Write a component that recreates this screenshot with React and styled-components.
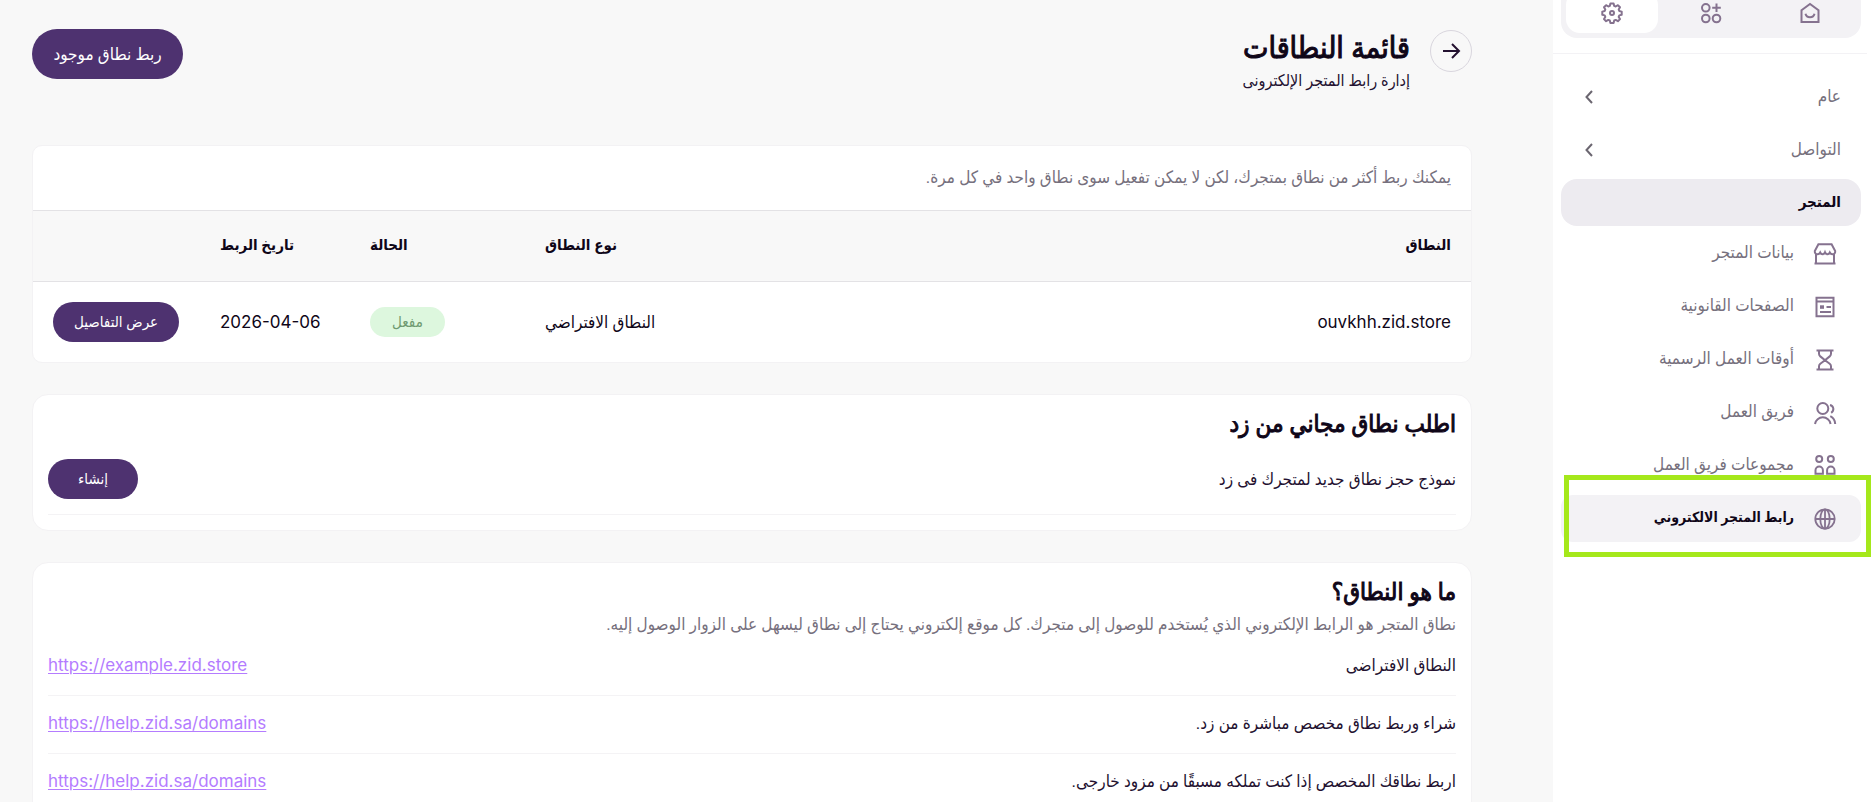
import styled, { createGlobalStyle } from 'styled-components';

const GlobalStyle = createGlobalStyle`
  * {
    box-sizing: border-box;
  }

  body {
    margin: 0;
    background: #f8f8f8;
    color: #0f0618;
    font-family: Roboto, 'DejaVu Sans Condensed', 'DejaVu Sans', sans-serif;
    font-size: 17px;
  }

  button {
    font-family: inherit;
    cursor: pointer;
  }
`;

const Page = styled.div`
  display: flex;
  height: 100vh;
  overflow: hidden;
`;

const Sidebar = styled.aside`
  flex: 0 0 318px;
  background: #fff;
  overflow: hidden;
`;

const TabsWrap = styled.div`
  margin-inline-start: 4px;
  padding: 0 6px 15px 8px;
  border-bottom: 1px solid #f3f2f5;
`;

const Tabs = styled.div`
  display: flex;
  gap: 7px;
  height: 52px;
  margin-top: -14px;
  padding: 5px;
  background: #f3f2f5;
  border-radius: 16px;
`;

const Tab = styled.button`
  flex: 1;
  display: flex;
  align-items: center;
  justify-content: center;
  padding: 2px 0 0;
  border: none;
  border-radius: 14px;
  background: ${props => (props.$active ? '#fff' : 'transparent')};
  color: #85728f;
`;

const Nav = styled.nav`
  display: flex;
  flex-direction: column;
  gap: 6px;
  padding: 19px 10px 0 8px;
`;

const Section = styled.button`
  display: flex;
  align-items: center;
  justify-content: space-between;
  width: 100%;
  height: 47px;
  padding: 0 20px 2px 24px;
  border: none;
  border-radius: 16px;
  background: ${props => (props.$active ? '#edebf0' : 'transparent')};
  color: ${props => (props.$active ? '#0f0618' : '#76707d')};
  font-size: ${props => (props.$active ? '15px' : '17px')};
  font-weight: ${props => (props.$active ? 700 : 400)};

  svg {
    margin-top: 2px;
  }
`;

const SubMenu = styled.div`
  display: flex;
  flex-direction: column;
  gap: 6px;
  margin-top: -2px;
`;

const SubLink = styled.a`
  display: flex;
  align-items: center;
  gap: 19px;
  height: 47px;
  padding: 0 24px;
  border-radius: 12px;
  background: ${props => (props.$active ? '#f3f2f5' : 'transparent')};
  color: ${props => (props.$active ? '#0f0618' : '#76707d')};
  font-size: ${props => (props.$active ? '14px' : '17px')};
  font-weight: ${props => (props.$active ? 700 : 400)};
  text-decoration: none;
  white-space: nowrap;

  svg {
    flex: none;
    color: #85728f;
  }
`;

const SubLabel = styled.span`
  padding-bottom: 3px;
`;

const Marked = styled.div`
  position: relative;

  &::after {
    content: '';
    position: absolute;
    top: -20px;
    bottom: -15px;
    right: -10px;
    left: 3px;
    border: 5px solid #a5e81b;
    pointer-events: none;
  }
`;

const Main = styled.main`
  flex: 1;
  min-width: 0;
  padding: 29px 81px 40px 32px;
  overflow-y: auto;
  scrollbar-width: none;
`;

const PageHeader = styled.header`
  display: flex;
  align-items: flex-start;
  gap: 20px;
  margin-bottom: 50px;
`;

const BackButton = styled.button`
  display: flex;
  align-items: center;
  justify-content: center;
  width: 42px;
  height: 42px;
  margin-top: 1px;
  padding: 0;
  border: 1px solid #d9d6de;
  border-radius: 50%;
  background: transparent;
  color: #231130;
`;

const Titles = styled.div`
  flex: 1;
`;

const Title = styled.h1`
  margin: 0;
  font-size: 30px;
  font-weight: 400;
  line-height: 38px;
  -webkit-text-stroke: 1px currentColor;
`;

const Subtitle = styled.p`
  margin: 0;
  color: #231130;
  font-size: 16px;
  line-height: 28px;
`;

const PillButton = styled.button`
  min-width: ${props => (props.$small ? '90px' : '151px')};
  height: ${props => (props.$small ? '40px' : '50px')};
  padding: 0 21px;
  border: none;
  border-radius: 25px;
  background: #4e3270;
  color: #fff;
  font-size: ${props => (props.$small ? '15px' : '17px')};
  white-space: nowrap;
`;

const Card = styled.section`
  margin-bottom: 31px;
  padding: ${props => (props.$flush ? '0' : '11px 15px 15px')};
  border: 1px solid #f3f2f4;
  border-radius: ${props => (props.$flush ? '10px' : '16px')};
  background: #fff;
  overflow: hidden;
`;

const CardIntro = styled.p`
  margin: 0;
  padding: 17px 20px 19px;
  color: #76707d;
  line-height: 28px;
`;

const CardTitle = styled.h2`
  margin: 0;
  font-size: 24px;
  font-weight: 400;
  line-height: 36px;
  -webkit-text-stroke: 1px currentColor;
`;

const CardText = styled.p`
  margin: 0;
  color: #76707d;
  line-height: 28px;
`;

const Table = styled.table`
  width: 100%;
  border-collapse: collapse;
  table-layout: fixed;
`;

const Th = styled.th`
  width: ${props => props.$width};
  height: 71px;
  padding: 0 20px 2px;
  border-top: 1px solid #e3e2e5;
  border-bottom: 1px solid #e3e2e5;
  background: #f8f8f8;
  font-size: 15px;
  font-weight: 700;
  text-align: ${props => (props.$start ? 'start' : 'end')};
`;

const Td = styled.td`
  height: 80px;
  padding: 0 20px;
  text-align: ${props => (props.$start ? 'start' : 'end')};
`;

const Latin = styled.span`
  font-family: Inter, sans-serif;
`;

const Badge = styled.span`
  display: inline-block;
  width: 75px;
  border-radius: 15px;
  background: #ddf7de;
  color: #6f9a71;
  font-size: 15px;
  line-height: 30px;
  text-align: center;
`;

const Row = styled.div`
  display: flex;
  align-items: center;
  justify-content: space-between;
  padding: ${props => (props.$tall ? '17px 0 15px' : '13px 0 16px')};
  border-bottom: 1px solid #f4f3f5;
  color: #231130;
  line-height: 28px;
`;

const TextLink = styled.a`
  color: #b47cff;
  font-family: Inter, sans-serif;
  text-decoration: underline;
  text-decoration-thickness: 1px;
  text-underline-offset: 2px;
`;

const Icon = ({ size = 24, children }) => (
  <svg
    width={size}
    height={size}
    viewBox="0 0 24 24"
    fill="none"
    stroke="currentColor"
    strokeWidth="2"
    aria-hidden="true"
  >
    {children}
  </svg>
);

const HomeIcon = () => (
  <Icon>
    <path d="M3.5 9.2 12 3l8.500 6.200V21h-17z" />
    <path d="M7.500 12.800a4.600 4.300 0 0 0 9 0" />
  </Icon>
);

const AppsIcon = () => (
  <Icon>
    <circle cx="6.800" cy="6.800" r="3.800" />
    <circle cx="6.800" cy="17.500" r="3.800" />
    <circle cx="17.500" cy="17.500" r="3.800" />
    <path d="M17.500 2.500v8.500M13.200 6.800h8.600" />
  </Icon>
);

const GearIcon = () => (
  <Icon>
    <circle cx="12" cy="12" r="2" />
    <path
      strokeLinejoin="round"
      d="M10.400 2.500h3.200l.6 2.400 1.500.6 2.200-1.300 2.100 2.100-1.300 2.200.6 1.500 2.400.6v3.200l-2.400.6-.6 1.500 1.300 2.200-2.100 2.100-2.200-1.300-1.500.6-.6 2.400h-3.200l-.6-2.400-1.500-.6-2.200 1.300-2.100-2.100 1.300-2.200-.6-1.500-2.400-.6v-3.200l2.400-.6.6-1.500L4 6.300l2.100-2.100 2.200 1.300 1.500-.6z"
    />
  </Icon>
);

const StoreIcon = () => (
  <Icon>
    <path d="M5.400 2.200h13.200l3.600 6.800c.2 1.900-1 3.200-2.500 3.200-1.300 0-2.300-.7-2.900-1.800-.6 1.100-1.400 1.800-2.400 1.800s-2-.7-2.400-1.800c-.4 1.100-1.300 1.800-2.400 1.800s-1.800-.7-2.400-1.800c-.6 1.100-1.600 1.800-2.900 1.800C2.800 12.200 1.600 10.900 1.800 9z" />
    <path d="M3 12v9.700M21 12v9.700M1.500 21.500h21" />
  </Icon>
);

const PagesIcon = () => (
  <Icon>
    <path d="M3.500 2.700h17v18.600h-17zM3.500 6.500h17M13.500 12H18M7 17h11" />
    <path d="M7 10.300h4v3.500H7z" fill="currentColor" stroke="none" />
  </Icon>
);

const HourglassIcon = () => (
  <Icon>
    <path d="M3.500 2.500h17M3.500 21.500h17" />
    <path d="M6 2.500v3.200c0 1.300.5 2 1.300 2.700L12 12.200l-4.700 3.600C6.500 16.500 6 17 6 18.300v3.200M18 2.500v3.200c0 1.300-.5 2-1.300 2.700L12 12.200l4.700 3.600c.8.7 1.300 1.200 1.300 2.500v3.200" />
  </Icon>
);

const TeamIcon = () => (
  <Icon>
    <circle cx="9.800" cy="7.500" r="5.500" />
    <path d="M2 23a7.900 7.900 0 0 1 15.600 0" />
    <path d="M17 4c3.800 1 4.600 5.600 1.200 7.800M17.300 15.200c3.100 1.500 4.700 4.200 4.900 7.800" />
  </Icon>
);

const GroupsIcon = () => (
  <Icon>
    <circle cx="6.200" cy="5" r="3" />
    <circle cx="17.800" cy="5" r="3" />
    <path d="M2.500 19.800v-3.600a3.700 3.700 0 0 1 7.400 0v3.600zM14.100 19.800v-3.600a3.700 3.700 0 0 1 7.400 0v3.600z" />
  </Icon>
);

const GlobeIcon = () => (
  <Icon>
    <g strokeWidth="1.800">
      <circle cx="12" cy="12" r="9.700" />
      <ellipse cx="12" cy="12" rx="4.700" ry="9.700" />
      <path d="M2.200 12h19.600M12 2.200v19.600" />
    </g>
  </Icon>
);

const ChevronIcon = () => (
  <svg width="8" height="14" viewBox="0 0 8 14" fill="none" stroke="#6b6670" strokeWidth="2" aria-hidden="true">
    <path d="M7 1 1.500 7 7 13" />
  </svg>
);

const ArrowIcon = () => (
  <Icon>
    <path d="M4 12h15M13 5l7 7-7 7" />
  </Icon>
);

const subItems = [
  { label: 'بيانات المتجر', icon: StoreIcon },
  { label: 'الصفحات القانونية', icon: PagesIcon },
  { label: 'أوقات العمل الرسمية', icon: HourglassIcon },
  { label: 'فريق العمل', icon: TeamIcon },
  { label: 'مجموعات فريق العمل', icon: GroupsIcon },
];

const helpRows = [
  { label: 'النطاق الافتراضى', url: 'https://example.zid.store' },
  { label: 'شراء وربط نطاق مخصص مباشرة من زد.', url: 'https://help.zid.sa/domains' },
  { label: 'اربط نطاقك المخصص إذا كنت تملكه مسبقًا من مزود خارجى.', url: 'https://help.zid.sa/domains' },
];

const App = () => {
  return (
    <>
      <GlobalStyle />
      <Page dir="rtl" lang="ar">
        <Sidebar>
          <TabsWrap>
            <Tabs>
              <Tab type="button" aria-label="الرئيسية"><HomeIcon /></Tab>
              <Tab type="button" aria-label="التطبيقات"><AppsIcon /></Tab>
              <Tab type="button" aria-label="الإعدادات" $active><GearIcon /></Tab>
            </Tabs>
          </TabsWrap>

          <Nav>
            <Section type="button">عام <ChevronIcon /></Section>
            <Section type="button">التواصل <ChevronIcon /></Section>
            <Section type="button" $active>المتجر</Section>
            <SubMenu>
              {subItems.map(({ label, icon: ItemIcon }) => (
                <SubLink key={label} href="#">
                  <ItemIcon />
                  <SubLabel>{label}</SubLabel>
                </SubLink>
              ))}
              <Marked>
                <SubLink href="#" $active>
                  <GlobeIcon />
                  <SubLabel>رابط المتجر الالكتروني</SubLabel>
                </SubLink>
              </Marked>
            </SubMenu>
          </Nav>
        </Sidebar>

        <Main>
          <PageHeader>
            <BackButton type="button" aria-label="رجوع"><ArrowIcon /></BackButton>
            <Titles>
              <Title>قائمة النطاقات</Title>
              <Subtitle>إدارة رابط المتجر الإلكترونى</Subtitle>
            </Titles>
            <PillButton type="button">ربط نطاق موجود</PillButton>
          </PageHeader>

          <Card $flush>
            <CardIntro>يمكنك ربط أكثر من نطاق بمتجرك، لكن لا يمكن تفعيل سوى نطاق واحد في كل مرة.</CardIntro>
            <Table>
              <thead>
                <tr>
                  <Th $start>النطاق</Th>
                  <Th $width="420px">نوع النطاق</Th>
                  <Th $width="175px">الحالة</Th>
                  <Th $width="150px">تاريخ الربط</Th>
                  <Th $width="167px" />
                </tr>
              </thead>
              <tbody>
                <tr>
                  <Td $start><Latin>ouvkhh.zid.store</Latin></Td>
                  <Td>النطاق الافتراضي</Td>
                  <Td><Badge>مفعل</Badge></Td>
                  <Td><Latin>2026-04-06</Latin></Td>
                  <Td><PillButton type="button" $small>عرض التفاصيل</PillButton></Td>
                </tr>
              </tbody>
            </Table>
          </Card>

          <Card>
            <CardTitle>اطلب نطاق مجاني من زد</CardTitle>
            <Row $tall>
              <span>نموذج حجز نطاق جديد لمتجرك فى زد</span>
              <PillButton type="button" $small>إنشاء</PillButton>
            </Row>
          </Card>

          <Card>
            <CardTitle>ما هو النطاق؟</CardTitle>
            <CardText>
              نطاق المتجر هو الرابط الإلكتروني الذي يُستخدم للوصول إلى متجرك. كل موقع إلكتروني يحتاج إلى نطاق ليسهل على الزوار الوصول إليه.
            </CardText>
            {helpRows.map(row => (
              <Row key={row.label}>
                <span>{row.label}</span>
                <TextLink href={row.url} dir="ltr">{row.url}</TextLink>
              </Row>
            ))}
          </Card>
        </Main>
      </Page>
    </>
  );
};

export default App;
